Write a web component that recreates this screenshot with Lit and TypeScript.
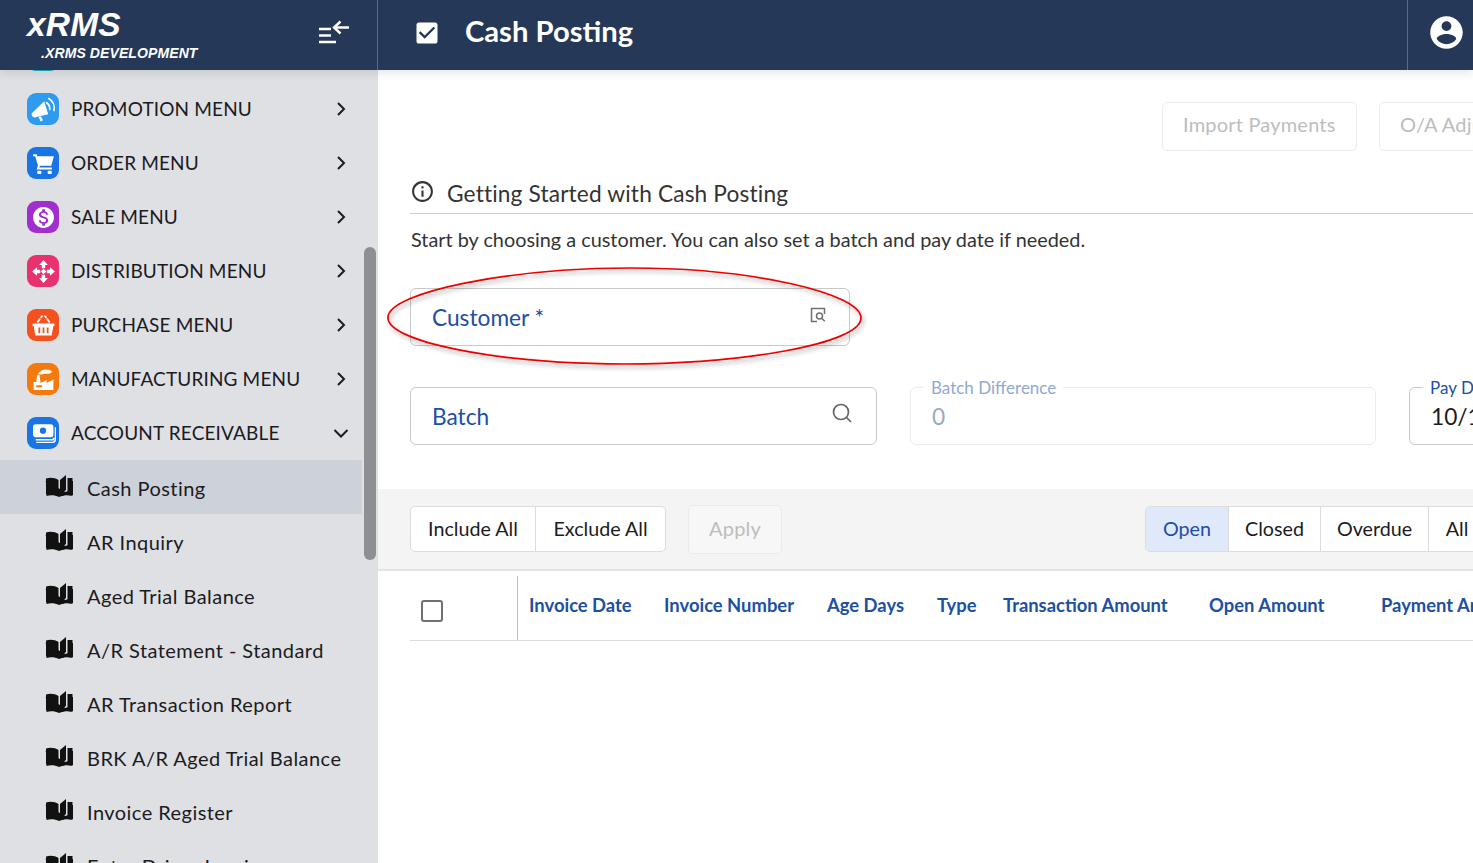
import { LitElement, css, html, svg } from 'lit';
import { customElement } from 'lit/decorators.js';

const menuIcons = {
  promo: svg`<path d="M2 14.500 12.700 4l3.800 12.500L5 19.200a2.600 2.600 0 0 1-3-4.700z"/><path d="m7.200 19 2.300-.6 2 4-2.300 1z"/><path d="M15 5.500a7 7 0 0 1 3 6.500M17 1.500a10.500 10.500 0 0 1 5 11.500" fill="none" stroke="#fff" stroke-width="1.600" stroke-linecap="round"/>`,
  cart: svg`<path d="M2 3h3.400l.7 2H22l-2.600 9.200H8.600l-.5 1.600H20v2H5.400l1.300-4L4 5H2z"/><rect x="6" y="19" width="4" height="3" rx="1"/><rect x="16" y="19" width="4" height="3" rx="1"/>`,
  sale: svg`<path d="M12 2C6.480 2 2 6.480 2 12s4.480 10 10 10 10-4.480 10-10S17.520 2 12 2zm1.410 16.090V20h-2.670v-1.930c-1.710-.36-3.160-1.460-3.270-3.400h1.960c.1 1.050.82 1.870 2.650 1.870 1.960 0 2.400-.98 2.400-1.590 0-.83-.44-1.610-2.670-2.140-2.480-.6-4.180-1.620-4.180-3.670 0-1.720 1.390-2.840 3.110-3.210V4h2.670v1.950c1.860.45 2.790 1.860 2.850 3.390H14.300c-.05-1.110-.64-1.870-2.220-1.870-1.500 0-2.400.68-2.400 1.640 0 .84.65 1.390 2.670 1.910s4.180 1.390 4.180 3.910c-.01 1.830-1.380 2.830-3.120 3.160z"/>`,
  dist: svg`<path d="m12 1 4.200 4.800h-2.600v3h-3.200v-3H7.800zM12 23l4.200-4.800h-2.600v-3h-3.200v3H7.800zM1 12l4.800-4.200v2.600h3v3.200h-3v2.600zM23 12l-4.800-4.200v2.600h-3v3.200h3v2.600z"/><path d="m12 9.300 2.700 2.700-2.700 2.700L9.300 12z"/>`,
  basket: svg`<path d="M1.500 10h21v2.500h-1l-1.700 9H4.200l-1.700-9h-1z"/><path d="M6.500 8.500 10.500 3M17.500 8.500 13.500 3" fill="none" stroke="#fff" stroke-width="1.800" stroke-linecap="round" stroke-dasharray="3.200 2.400"/><path d="M8 14v5.500M12 14v5.500M16 14v5.500" stroke="#f4511e" stroke-width="1.700"/>`,
  factory: svg`<path d="M2.500 22v-7.500h2.500l1-7h2.200l1 7.800 5.800-2.800v2.800l6.500-3.300V22z"/><ellipse cx="14.500" cy="4.500" rx="5.500" ry="2"/><ellipse cx="9.500" cy="6" rx="2.500" ry="1.300"/><rect x="5" y="17.500" width="5.500" height="2" fill="#f57a0d"/>`,
  money: svg`<path d="M4.500 3h14.500A2.500 2.500 0 0 1 21.500 5.500v7.500a2.500 2.500 0 0 1-2.500 2.500H4.500A2.500 2.500 0 0 1 2 13V5.500A2.500 2.500 0 0 1 4.500 3z"/><circle cx="11.500" cy="9.300" r="3" fill="#1b74e4"/><path d="M4.500 18h15.500a2 2 0 0 0 2-2" fill="none" stroke="#fff" stroke-width="1.600"/><path d="M23.500 6v11.500a3 3 0 0 1-3 3H5" fill="none" stroke="#fff" stroke-width="1.400"/>`,
};

const topMenus = [
  { label: 'PROMOTION MENU', color: '#2f9bef', icon: menuIcons.promo },
  { label: 'ORDER MENU', color: '#1b74e4', icon: menuIcons.cart },
  { label: 'SALE MENU', color: '#a12fce', icon: menuIcons.sale },
  { label: 'DISTRIBUTION MENU', color: '#e7326f', icon: menuIcons.dist },
  { label: 'PURCHASE MENU', color: '#f4511e', icon: menuIcons.basket },
  { label: 'MANUFACTURING MENU', color: '#f57a0d', icon: menuIcons.factory },
  { label: 'ACCOUNT RECEIVABLE', color: '#1b74e4', icon: menuIcons.money, open: true },
];

const subMenus = [
  'Cash Posting',
  'AR Inquiry',
  'Aged Trial Balance',
  'A/R Statement - Standard',
  'AR Transaction Report',
  'BRK A/R Aged Trial Balance',
  'Invoice Register',
  'Enter Driver Invoice',
];

const columns = [
  'Invoice Date',
  'Invoice Number',
  'Age Days',
  'Type',
  'Transaction Amount',
  'Open Amount',
  'Payment Amount',
];

const bookIcon = html`<svg class="book" viewBox="0 0 28 22" fill="#111">
  <path d="M1 3.500C5 2 10 2.500 13.500 5V21C10 18.500 5 18 1 19.500z" />
  <path d="M15 5 21 0v15l-6 4.500z" />
  <path d="M22.500 3h5v17.500c-4-1-8.500-.8-12.500 1 2-2.600 4.600-4.300 7.500-5.200z" />
  <path d="M0 6h1.500v15C5 20 10 20 14 22c4-2 9-2 14-1v-1h-1V6h1v15z" />
</svg>`;

@customElement('app-root')
export class AppRoot extends LitElement {
  static styles = css`
    :host {
      display: block;
      width: 1473px;
      height: 863px;
      overflow: hidden;
      position: relative;
      font-family: 'Lato', 'Noto Sans', sans-serif;
      color: #1b1b22;
      background: #fff;
    }

    .topbar {
      position: relative;
      z-index: 2;
      display: flex;
      height: 70px;
      background: #263858;
      color: #fff;
      box-shadow: 0 2px 10px rgba(0, 0, 0, 0.12);
    }

    .brand {
      display: flex;
      flex: 0 0 378px;
      box-sizing: border-box;
      justify-content: space-between;
      padding: 0 27px 0 27px;
      border-right: 1px solid #5d6a83;
    }

    .logo {
      font-family: 'Liberation Sans', sans-serif;
      font-style: italic;
      font-weight: 700;
      font-size: 33.500px;
      line-height: 36px;
      padding-top: 7px;
      letter-spacing: 0.2px;
    }

    .logo-sub {
      font-size: 14px;
      line-height: 16px;
      font-weight: 700;
      margin: 2px 0 0 14px;
      letter-spacing: 0.1px;
    }

    .collapse {
      width: 32px;
      height: 26px;
      margin-top: 20px;
    }

    .page-title {
      display: flex;
      flex: 1;
      align-items: center;
      gap: 24px;
      padding: 0 0 9px 35px;
      font-size: 29.200px;
      font-weight: 700;
    }

    .page-title svg {
      width: 28px;
      height: 28px;
      margin-top: 5px;
      fill: #fff;
    }

    .user {
      display: flex;
      flex: 0 0 66px;
      box-sizing: border-box;
      align-items: center;
      justify-content: center;
      padding: 0 0 6px 11px;
      border-left: 1px solid #5d6a83;
    }

    .user svg {
      width: 39px;
      height: 39px;
      fill: #fff;
    }

    .layout {
      display: flex;
      height: 793px;
    }

    .sidebar {
      position: relative;
      flex: 0 0 378px;
      overflow: hidden;
      background: #dfe0e4;
    }

    .menu {
      width: 362px;
      margin-top: -42px;
    }

    .row {
      display: flex;
      align-items: center;
      height: 54px;
      box-sizing: border-box;
      padding-left: 27px;
      font-size: 19px;
      white-space: nowrap;
    }

    .badge {
      flex: 0 0 32px;
      display: flex;
      align-items: center;
      justify-content: center;
      height: 32px;
      margin-right: 12px;
      border-radius: 9px;
    }

    .badge svg {
      width: 25px;
      height: 25px;
      fill: #fff;
    }

    .row .label {
      flex: 1;
      padding-bottom: 2px;
      letter-spacing: 0.15px;
    }

    .chevron {
      width: 22px;
      height: 22px;
      margin-right: 10px;
      fill: none;
      stroke: #1b1b22;
      stroke-width: 2;
    }

    .sub {
      padding-left: 45px;
      font-size: 20px;
    }

    .sub.active {
      background: #cdd1d9;
    }

    .book {
      flex: 0 0 28px;
      height: 22px;
      margin: -2px 14px 0 0;
    }

    .row.sub .label {
      padding: 1px 0 0;
      letter-spacing: 0.45px;
    }

    .thumb {
      position: absolute;
      left: 364px;
      top: 177px;
      width: 12px;
      height: 313px;
      border-radius: 6px;
      background: #8e8f93;
    }

    .main {
      position: relative;
      flex: 1;
      min-width: 0;
      overflow: hidden;
      white-space: nowrap;
    }

    .pad {
      padding-left: 32px;
    }

    .toolbar {
      display: flex;
      gap: 22px;
      margin: 32px 0 0 784px;
    }

    .btn {
      flex: none;
      box-sizing: border-box;
      height: 49px;
      padding: 0 20px 6px;
      display: flex;
      align-items: center;
      font-size: 20px;
      color: #bdbdbd;
      border: 1px solid #ececec;
      border-radius: 5px;
      letter-spacing: 0.2px;
    }

    .toolbar .btn:first-child {
      width: 195px;
    }

    .toolbar .btn:last-child {
      width: 140px;
    }

    .section-head {
      display: flex;
      align-items: center;
      gap: 12px;
      height: 63px;
      box-sizing: border-box;
      padding: 22px 0 0 0;
      border-bottom: 1px solid #cfcfcf;
      font-size: 22.700px;
      color: #333;
      letter-spacing: 0.15px;
    }

    .section-head svg {
      width: 25px;
      height: 25px;
      margin-top: -4px;
      fill: #333;
    }

    .hint {
      margin: 13px 0 0 1px;
      font-size: 19.850px;
      line-height: 24px;
      color: #333;
    }

    .field {
      position: relative;
      flex: none;
      display: flex;
      align-items: center;
      justify-content: space-between;
      box-sizing: border-box;
      height: 58px;
      padding: 0 21px;
      border: 1px solid #c9c9c9;
      border-radius: 6px;
      font-size: 22.700px;
      color: #1d4fa3;
    }

    .customer {
      width: 440px;
      margin-top: 37px;
      padding-right: 22px;
    }

    .customer svg {
      width: 18px;
      height: 18px;
      margin-top: -4px;
      fill: none;
      stroke: #707070;
      stroke-width: 1.500;
    }

    .fields {
      display: flex;
      gap: 33px;
      margin-top: 41px;
    }

    .batch {
      width: 467px;
      padding-right: 23px;
    }

    .batch svg {
      width: 22px;
      height: 22px;
      margin-top: -6px;
      fill: none;
      stroke: #666;
      stroke-width: 1.700;
    }

    .diff {
      width: 466px;
      border-color: #ececec;
      color: #9aa9c2;
    }

    .date {
      width: 200px;
      color: #1b1b22;
    }

    .legend {
      position: absolute;
      left: 13px;
      top: -11px;
      padding: 0 7px;
      background: #fff;
      font-size: 17px;
      line-height: 22px;
      color: #93a9d0;
    }

    .date .legend {
      left: 13px;
      color: #1d4fa3;
    }

    .band {
      display: flex;
      align-items: center;
      justify-content: space-between;
      box-sizing: border-box;
      height: 82px;
      margin-top: 44px;
      padding-left: 32px;
      background: #f4f4f4;
      border-bottom: 2px solid #e4e4e4;
    }

    .actions {
      display: flex;
      align-items: center;
      gap: 22px;
    }

    .group {
      display: flex;
      flex: none;
      height: 46px;
      box-sizing: border-box;
      border: 1px solid #dcdcdc;
      border-radius: 5px;
      background: #fff;
      overflow: hidden;
      font-size: 19.700px;
    }

    .group span {
      display: flex;
      align-items: center;
      justify-content: center;
      box-sizing: border-box;
      padding-bottom: 2px;
      border-left: 1px solid #dcdcdc;
    }

    .group span:first-child {
      border-left: 0;
    }

    .group .on {
      background: #dfe9fa;
      color: #1d4fa3;
    }

    .apply {
      width: 94px;
      justify-content: center;
      padding: 0 0 3px;
      background: #f7f7f7;
      border-color: #ebebeb;
    }

    .status {
      margin-right: -13px;
    }

    .thead {
      display: grid;
      grid-template-columns: 108px 146px 163px 110px 66px 206px 172px 200px;
      height: 70px;
      margin: 0 -200px 0 32px;
      box-sizing: border-box;
      border-bottom: 1px solid #dcdcdc;
      font-size: 18.400px;
      font-weight: 700;
      color: #1d4fa3;
    }

    .thead .check {
      display: flex;
      align-items: center;
      margin-top: 5px;
      padding-left: 11px;
      border-right: 1px solid #bdbdbd;
    }

    .check i {
      display: block;
      box-sizing: border-box;
      width: 22px;
      height: 22px;
      margin-top: 6px;
      border: 2px solid #707070;
      border-radius: 3px;
    }

    .thead .col {
      padding: 22px 0 0 11px;
      line-height: 24px;
    }

    .thead .col:nth-child(n + 3) {
      padding-left: 0;
    }

    .ring {
      position: absolute;
      left: 380px;
      top: 262px;
      width: 490px;
      height: 110px;
      z-index: 1;
      pointer-events: none;
      overflow: visible;
    }
  `;

  render() {
    return html`
      <div class="topbar">
        <div class="brand">
          <div class="logo">
            xRMS
            <div class="logo-sub">.XRMS DEVELOPMENT</div>
          </div>
          <svg class="collapse" viewBox="0 0 32 26" fill="none" stroke="#fff" stroke-width="2.400">
            <path d="M1 9h12M1 15.500h12M1 22h17" />
            <path d="M31 7.500H16M22.500 1.500l-6.500 6 6.500 6" />
          </svg>
        </div>
        <div class="page-title">
          <svg viewBox="0 0 24 24">
            <path
              d="M19 3H5c-1.110 0-2 .9-2 2v14c0 1.100.89 2 2 2h14c1.110 0 2-.9 2-2V5c0-1.100-.89-2-2-2zm-9 14l-5-5 1.410-1.410L10 14.170l7.590-7.590L19 8l-9 9z"
            />
          </svg>
          Cash Posting
        </div>
        <div class="user">
          <svg viewBox="0 0 24 24">
            <path
              d="M12 2C6.480 2 2 6.480 2 12s4.480 10 10 10 10-4.480 10-10S17.520 2 12 2zm0 3c1.660 0 3 1.340 3 3s-1.340 3-3 3-3-1.340-3-3 1.340-3 3-3zm0 14.200c-2.500 0-4.710-1.280-6-3.220.03-1.990 4-3.080 6-3.080 1.990 0 5.970 1.090 6 3.080-1.290 1.940-3.500 3.220-6 3.220z"
            />
          </svg>
        </div>
      </div>

      <div class="layout">
        <aside class="sidebar">
          <div class="menu">
            <div class="row"><span class="badge" style="background:#16b0c4"></span></div>
            ${topMenus.map(
              (item) => html`
                <div class="row">
                  <span class="badge" style="background:${item.color}">
                    <svg viewBox="0 0 24 24">${item.icon}</svg>
                  </span>
                  <span class="label">${item.label}</span>
                  <svg class="chevron" viewBox="0 0 22 22">
                    <path d=${item.open ? 'M4.500 8l6.500 6.500L17.500 8' : 'M8 5l6 6-6 6'} />
                  </svg>
                </div>
              `
            )}
            ${subMenus.map(
              (label, index) => html`
                <div class="row sub ${index === 0 ? 'active' : ''}">
                  ${bookIcon}
                  <span class="label">${label}</span>
                </div>
              `
            )}
          </div>
          <div class="thumb"></div>
        </aside>

        <main class="main">
          <div class="toolbar">
            <div class="btn">Import Payments</div>
            <div class="btn">O/A Adjustment</div>
          </div>

          <div class="pad">
            <div class="section-head">
              <svg viewBox="0 0 24 24">
                <path
                  d="M11 7h2v2h-2zm0 4h2v6h-2zm1-9C6.480 2 2 6.480 2 12s4.480 10 10 10 10-4.480 10-10S17.520 2 12 2zm0 18c-4.410 0-8-3.590-8-8s3.590-8 8-8 8 3.590 8 8-3.590 8-8 8z"
                />
              </svg>
              Getting Started with Cash Posting
            </div>
            <p class="hint">
              Start by choosing a customer. You can also set a batch and pay date if needed.
            </p>

            <div class="field customer">
              Customer *
              <svg viewBox="0 0 18 18">
                <path d="M8 15.500H2.500V2.500h13V8" />
                <circle cx="10.500" cy="10" r="3" />
                <path d="m12.800 12.300 3 3" />
              </svg>
            </div>

            <div class="fields">
              <div class="field batch">
                Batch
                <svg viewBox="0 0 22 22">
                  <circle cx="10" cy="10" r="7.500" />
                  <path d="m15.500 15.500 4.500 4.500" />
                </svg>
              </div>
              <div class="field diff">
                <span class="legend">Batch Difference</span>
                <span>0</span>
              </div>
              <div class="field date">
                <span class="legend">Pay Date</span>
                <span>10/15/2024</span>
              </div>
            </div>
          </div>

          <div class="band">
            <div class="actions">
              <div class="group">
                <span style="width:124px">Include All</span>
                <span style="width:130px">Exclude All</span>
              </div>
              <div class="btn apply">Apply</div>
            </div>
            <div class="group status">
              <span class="on" style="width:82px">Open</span>
              <span style="width:92px">Closed</span>
              <span style="width:108px">Overdue</span>
              <span style="width:57px">All</span>
            </div>
          </div>

          <div class="thead">
            <div class="check"><i></i></div>
            ${columns.map((name) => html`<div class="col">${name}</div>`)}
          </div>
        </main>
      </div>

      <svg class="ring" viewBox="0 0 490 110">
        <defs>
          <filter id="ring-shadow" x="-5%" y="-20%" width="110%" height="140%">
            <feDropShadow dx="2" dy="3" stdDeviation="2" flood-color="#000" flood-opacity="0.35" />
          </filter>
        </defs>
        <path
          d="M8 55C10 30 130 6 250 6C375 6 481 32 481 56C481 82 360 102 245 102C120 102 6 80 8 55z"
          fill="none"
          stroke="#ee0000"
          stroke-width="1.700"
          filter="url(#ring-shadow)"
        />
      </svg>
    `;
  }
}
